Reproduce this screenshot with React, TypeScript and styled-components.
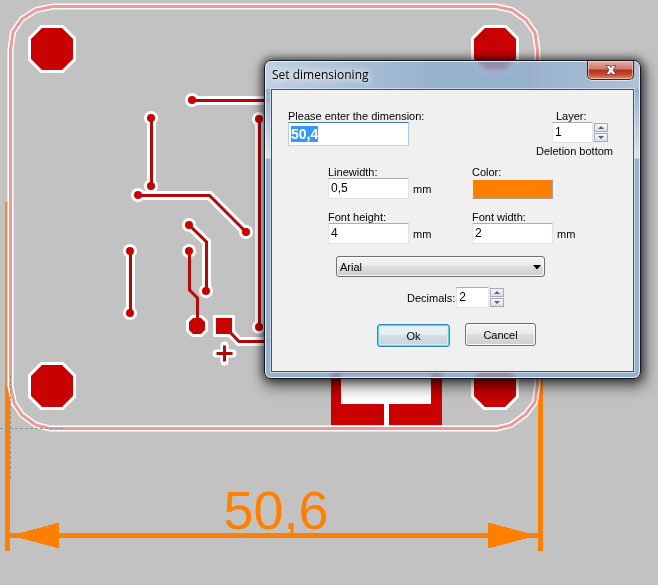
import React, { useEffect, useRef, useState } from "react";
import styled, { createGlobalStyle, css } from "styled-components";

const GlobalStyle = createGlobalStyle`
  *, *::before, *::after { box-sizing: border-box; }
  body { margin: 0; background: #c2c2c2; overflow: hidden; }
  body, input, select, button { font-family: "Liberation Sans", Arial, sans-serif; font-size: 11px; color: #000; }
`;

const Workspace = styled.main`
  position: relative;
  height: 100vh;
  overflow: hidden;
  background: #c2c2c2;
`;

const Board = styled.svg`
  display: block;
  width: 100%;
  height: 100%;
`;

const Window = styled.section`
  position: absolute;
  left: 264px;
  top: 60px;
  width: 377px;
  padding: 0 6px 6px;
  border: 1px solid #15181c;
  border-radius: 7px;
  background:
    linear-gradient(90deg, rgba(255, 255, 255, 0.4), rgba(255, 255, 255, 0) 45%, rgba(255, 255, 255, 0) 70%, rgba(255, 255, 255, 0.22)) top / 100% 28px no-repeat,
    linear-gradient(rgba(215, 225, 237, 0) 28px, rgba(228, 236, 244, 0.85) 97px, rgba(228, 236, 244, 0) 98px),
    rgba(141, 172, 206, 0.82);
  backdrop-filter: blur(2px);
  box-shadow:
    inset 0 0 0 1px rgba(255, 255, 255, 0.75),
    0 0 8px 1px rgba(0, 0, 0, 0.6),
    2px 5px 14px 3px rgba(0, 0, 0, 0.5);
`;

const TitleBar = styled.header`
  display: flex;
  justify-content: space-between;
  align-items: flex-start;
  height: 28px;
  padding-left: 1px;
`;

const Title = styled.h1`
  margin: 0;
  font: 12px/28px "Open Sans", "Noto Sans", sans-serif;
  text-shadow: 0 0 6px #fff, 0 0 8px #fff;
`;

const CloseButton = styled.button`
  display: flex;
  align-items: center;
  justify-content: center;
  width: 47px;
  height: 19px;
  padding: 0;
  border: 1px solid #4a1f20;
  border-top: 0;
  border-radius: 0 0 5px 5px;
  background: linear-gradient(#e3b0a5, #d0796a 45%, #b0301c 50%, #c4492f 75%, #e08b68);
  box-shadow: inset 0 0 0 1px rgba(255, 225, 215, 0.55), 0 1px 0 rgba(255, 255, 255, 0.6);
`;

const Client = styled.form`
  display: flex;
  flex-direction: column;
  padding: 20px 20px 24px 16px;
  border: 1px solid #43525f;
  background: #f0f0f0;
  box-shadow: 0 0 0 1px rgba(225, 237, 247, 0.65);
`;

const TopRow = styled.div`
  display: flex;
  justify-content: space-between;
  align-items: flex-start;
  height: 56px;
`;

const MetricGrid = styled.div`
  display: grid;
  grid-template-columns: 144px 1fr;
  row-gap: 12px;
  padding-left: 40px;
`;

const Field = styled.div<{ $indent?: boolean }>`
  display: flex;
  flex-direction: column;
  align-items: flex-start;
  padding-left: ${(p) => (p.$indent ? 16 : 0)}px;
`;

const Label = styled.label<{ $inset?: boolean }>`
  line-height: 12px;
  white-space: nowrap;
  padding-left: ${(p) => (p.$inset ? 4 : 0)}px;
`;

const Inline = styled.div<{ $gap?: number }>`
  display: flex;
  align-items: center;
  gap: ${(p) => p.$gap ?? 0}px;
`;

const TextBox = styled.input<{ $width: number; $large?: boolean }>`
  width: ${(p) => p.$width}px;
  height: 21px;
  padding: 0 2px 1px;
  border: 1px solid #e2e3ea;
  border-top-color: #abadb3;
  border-radius: 1px;
  background: #fff;
  font-size: 12px;
  outline: none;
  ${(p) =>
    p.$large &&
    css`
      height: 24px;
      border-color: #3d7bad #a4c9e3 #b7d9ed #b5cfe7;
      font-size: 14px;
      font-weight: bold;
    `}
  &::selection { background: #3399ff; color: #fff; }
`;

const Swatch = styled.button`
  width: 81px;
  height: 20px;
  margin-top: 1px;
  padding: 0;
  border: 1px solid #a0a0a0;
  border-top-color: #fff0c8;
  border-left-color: #fff0c8;
  background: #ff8000;
`;

const SpinColumn = styled.div`
  display: flex;
  flex-direction: column;
  gap: 1px;
  padding: 0 1px;
`;

const SpinButton = styled.button`
  display: flex;
  align-items: center;
  justify-content: center;
  width: 14px;
  height: 9px;
  padding: 0;
  border: 1px solid #a9abb2;
  background: linear-gradient(#f6f6f6, #dfdfe2);
`;

const Note = styled.p`
  margin: 1px 0 0;
  line-height: 14px;
  white-space: nowrap;
`;

const SelectWrap = styled.div`
  position: relative;
  width: 209px;
  margin: 12px 0 10px 48px;
`;

const chrome = css`
  border: 1px solid #707070;
  border-radius: 3px;
  background: linear-gradient(#f3f3f3, #ebebeb 49%, #dddddd 50%, #cfcfcf);
  box-shadow: inset 0 0 0 1px #fafafa;
`;

const FontSelect = styled.select`
  ${chrome}
  display: block;
  appearance: none;
  width: 100%;
  height: 21px;
  padding: 0 20px 0 3px;
`;

const SelectArrow = styled.svg`
  position: absolute;
  right: 4px;
  top: 9px;
  pointer-events: none;
`;

const Decimals = styled.div`
  display: flex;
  align-items: center;
  gap: 1px;
  padding-left: 119px;
`;

const Actions = styled.div`
  display: flex;
  gap: 15px;
  padding: 15px 0 0 89px;
`;

const ActionButton = styled.button<{ $primary?: boolean }>`
  ${chrome}
  width: ${(p) => (p.$primary ? 73 : 71)}px;
  height: 23px;
  padding: 0;
  ${(p) =>
    p.$primary &&
    css`
      margin-top: 1px;
      border-color: #3c7fb1;
      background: linear-gradient(#eef3f5, #e6edf0 49%, #d3dde2 50%, #c9d5dc);
      box-shadow: inset 0 0 0 1px #5fd4f4, inset 0 0 0 2px #c9eff9;
    `}
`;

type Point = [number, number];

const path = (points: Point[], close = false) =>
  points.map(([x, y], i) => `${i ? "L" : "M"}${x} ${y}`).join("") + (close ? "Z" : "");

const octagon = (x: number, y: number, r: number, cut: number) =>
  path(
    [
      [x - r + cut, y - r], [x + r - cut, y - r], [x + r, y - r + cut], [x + r, y + r - cut],
      [x + r - cut, y + r], [x - r + cut, y + r], [x - r, y + r - cut], [x - r, y - r + cut],
    ],
    true,
  );

const traces: Point[][] = [
  [[192, 100.5], [280, 100.5]],
  [[151.5, 118], [151.5, 186]],
  [[138, 195.5], [209.5, 195.5], [246, 232]],
  [[189, 225], [206.5, 242], [206.5, 291]],
  [[130.5, 251], [130.5, 313]],
  [[259.5, 119], [259.5, 327]],
  [[226, 328], [239, 341.5], [290, 341.5]],
];

const feeder: Point[] = [[189.5, 251], [189.5, 290], [197.5, 298], [197.5, 326]];

const vias: Point[] = [
  [192, 100], [151, 118], [151, 186], [138, 195], [246, 232], [189, 225],
  [206, 291], [189, 251], [130, 251], [130, 313], [259, 119], [259, 327],
];

const holes: Point[] = [[52, 49], [495, 49], [52, 386], [495, 386]];

const outline = path(
  [
    [10.5, 50], [13, 32], [22, 19], [36, 10], [53, 6.5], [496, 6.5], [512, 10], [526, 20],
    [535, 33], [537.5, 50], [537.5, 384], [535, 402], [526, 414], [511, 425], [497, 428.5],
    [50, 428.5], [36, 425], [22, 415], [14, 403], [10.5, 386],
  ],
  true,
);

function BoardDrawing() {
  return (
    <Board role="img" aria-label="Circuit board with dimension 50,6">
      <g shapeRendering="crispEdges">
        <path d="M5 202H10V387H5Z" fill="#dc903c" />
        <path d="M5 387H10V551H5ZM538 202H543V551H538Z" fill="#ff8000" />
        <path d="M10 533H538V538H10Z" fill="#ff8000" />
        <path d="M11 535.5L59 522.5V548.5ZM537 535.5L488 522.5V548.5Z" fill="#ff8000" />
      </g>
      <path d={outline} fill="none" stroke="#fff" strokeWidth="6" />
      <path d={outline} fill="none" stroke="#f09898" strokeWidth="3" />
      <path d="M0 428.5H63M10.5 376V481" stroke="#929292" strokeDasharray="3 2" />
      <g fill="#c80000" stroke="#fff" strokeWidth="6" paintOrder="stroke">
        {holes.map(([x, y]) => (
          <path key={`${x}-${y}`} d={octagon(x, y, 21, 11)} />
        ))}
      </g>
      <g fill="none" stroke="#fff" strokeWidth="9">
        {traces.map((t, i) => (
          <path key={i} d={path(t)} />
        ))}
      </g>
      <path d={path(feeder)} fill="none" stroke="#e6a8a8" strokeWidth="4" />
      <g fill="#fff">
        {vias.map(([x, y]) => (
          <circle key={`${x}-${y}`} cx={x} cy={y} r="7" />
        ))}
        <path d={octagon(197, 326, 11, 6)} />
        <rect x="213" y="315" width="22" height="22" rx="1" />
      </g>
      <g fill="none" stroke="#b00a0a" strokeWidth="3">
        {[...traces, feeder].map((t, i) => (
          <path key={i} d={path(t)} />
        ))}
      </g>
      <g fill="#c80000">
        {vias.map(([x, y]) => (
          <circle key={`${x}-${y}`} cx={x} cy={y} r="4" />
        ))}
        <path d={octagon(197, 326, 8, 4)} />
        <rect x="216" y="318" width="16" height="16" />
      </g>
      <path d="M216.5 353.5H232.5M224.5 345.5V361.5" stroke="#fff" strokeWidth="8" strokeLinecap="round" />
      <path d="M216.5 353.5H232.5M224.5 345.5V361.5" stroke="#b00a0a" strokeWidth="3" />
      <rect x="331" y="350" width="111" height="75" fill="#c80000" />
      <path d="M341 374H431V404H389V426H384V404H341Z" fill="#fff" />
      <text
        x="276"
        y="529"
        textAnchor="middle"
        fontFamily='"Liberation Sans", Arial, sans-serif'
        fontSize="54"
        fill="#ff8000"
      >
        50,6
      </text>
    </Board>
  );
}

function Spinner({ name, onStep }: { name: string; onStep: (delta: number) => void }) {
  return (
    <SpinColumn>
      <SpinButton type="button" aria-label={`Increase ${name}`} onClick={() => onStep(1)}>
        <svg width="6" height="3"><path d="M0 3L3 0L6 3Z" fill="#4a5f9c" /></svg>
      </SpinButton>
      <SpinButton type="button" aria-label={`Decrease ${name}`} onClick={() => onStep(-1)}>
        <svg width="6" height="3"><path d="M0 0L3 3L6 0Z" fill="#4a5f9c" /></svg>
      </SpinButton>
    </SpinColumn>
  );
}

function Measure({ id, label, value }: { id: string; label: string; value: string }) {
  return (
    <Field>
      <Label htmlFor={id}>{label}</Label>
      <Inline $gap={4}>
        <TextBox id={id} $width={81} defaultValue={value} />
        <span>mm</span>
      </Inline>
    </Field>
  );
}

export default function App() {
  const dimension = useRef<HTMLInputElement>(null);
  const [layer, setLayer] = useState(1);
  const [decimals, setDecimals] = useState(2);

  useEffect(() => {
    dimension.current?.focus();
    dimension.current?.select();
  }, []);

  return (
    <Workspace>
      <GlobalStyle />
      <BoardDrawing />
      <Window role="dialog" aria-labelledby="dialog-title">
        <TitleBar>
          <Title id="dialog-title">Set dimensioning</Title>
          <CloseButton type="button" aria-label="Close">
            <svg width="12" height="10" viewBox="0 0 12 10">
              <path
                d="M1 .5H4.5L6 2.5L7.5 .5H11L8 5L11 9.5H7.5L6 7.5L4.5 9.5H1L4 5Z"
                fill="#f6f6f6"
                stroke="#5b3a3c"
                strokeWidth="0.8"
              />
            </svg>
          </CloseButton>
        </TitleBar>
        <Client onSubmit={(e) => e.preventDefault()}>
          <TopRow>
            <Field>
              <Label htmlFor="dimension">Please enter the dimension:</Label>
              <TextBox id="dimension" ref={dimension} $width={121} $large defaultValue="50,4" />
            </Field>
            <div>
              <Field $indent>
                <Label htmlFor="layer" $inset>Layer:</Label>
                <Inline>
                  <TextBox id="layer" $width={41} value={layer} onChange={(e) => setLayer(Number(e.target.value) || 0)} />
                  <Spinner name="layer" onStep={(d) => setLayer((v) => Math.max(1, v + d))} />
                </Inline>
              </Field>
              <Note>Deletion bottom</Note>
            </div>
          </TopRow>
          <MetricGrid>
            <Measure id="linewidth" label="Linewidth:" value="0,5" />
            <Field>
              <Label htmlFor="color">Color:</Label>
              <Swatch id="color" type="button" />
            </Field>
            <Measure id="font-height" label="Font height:" value="4" />
            <Measure id="font-width" label="Font width:" value="2" />
          </MetricGrid>
          <SelectWrap>
            <FontSelect aria-label="Font" defaultValue="Arial">
              <option>Arial</option>
            </FontSelect>
            <SelectArrow width="8" height="5"><path d="M0 0H8L4 4.5Z" fill="#000" /></SelectArrow>
          </SelectWrap>
          <Decimals>
            <Label htmlFor="decimals">Decimals:</Label>
            <Inline>
              <TextBox id="decimals" $width={33} value={decimals} onChange={(e) => setDecimals(Number(e.target.value) || 0)} />
              <Spinner name="decimals" onStep={(d) => setDecimals((v) => Math.max(0, v + d))} />
            </Inline>
          </Decimals>
          <Actions>
            <ActionButton type="submit" $primary>Ok</ActionButton>
            <ActionButton type="button">Cancel</ActionButton>
          </Actions>
        </Client>
      </Window>
    </Workspace>
  );
}
